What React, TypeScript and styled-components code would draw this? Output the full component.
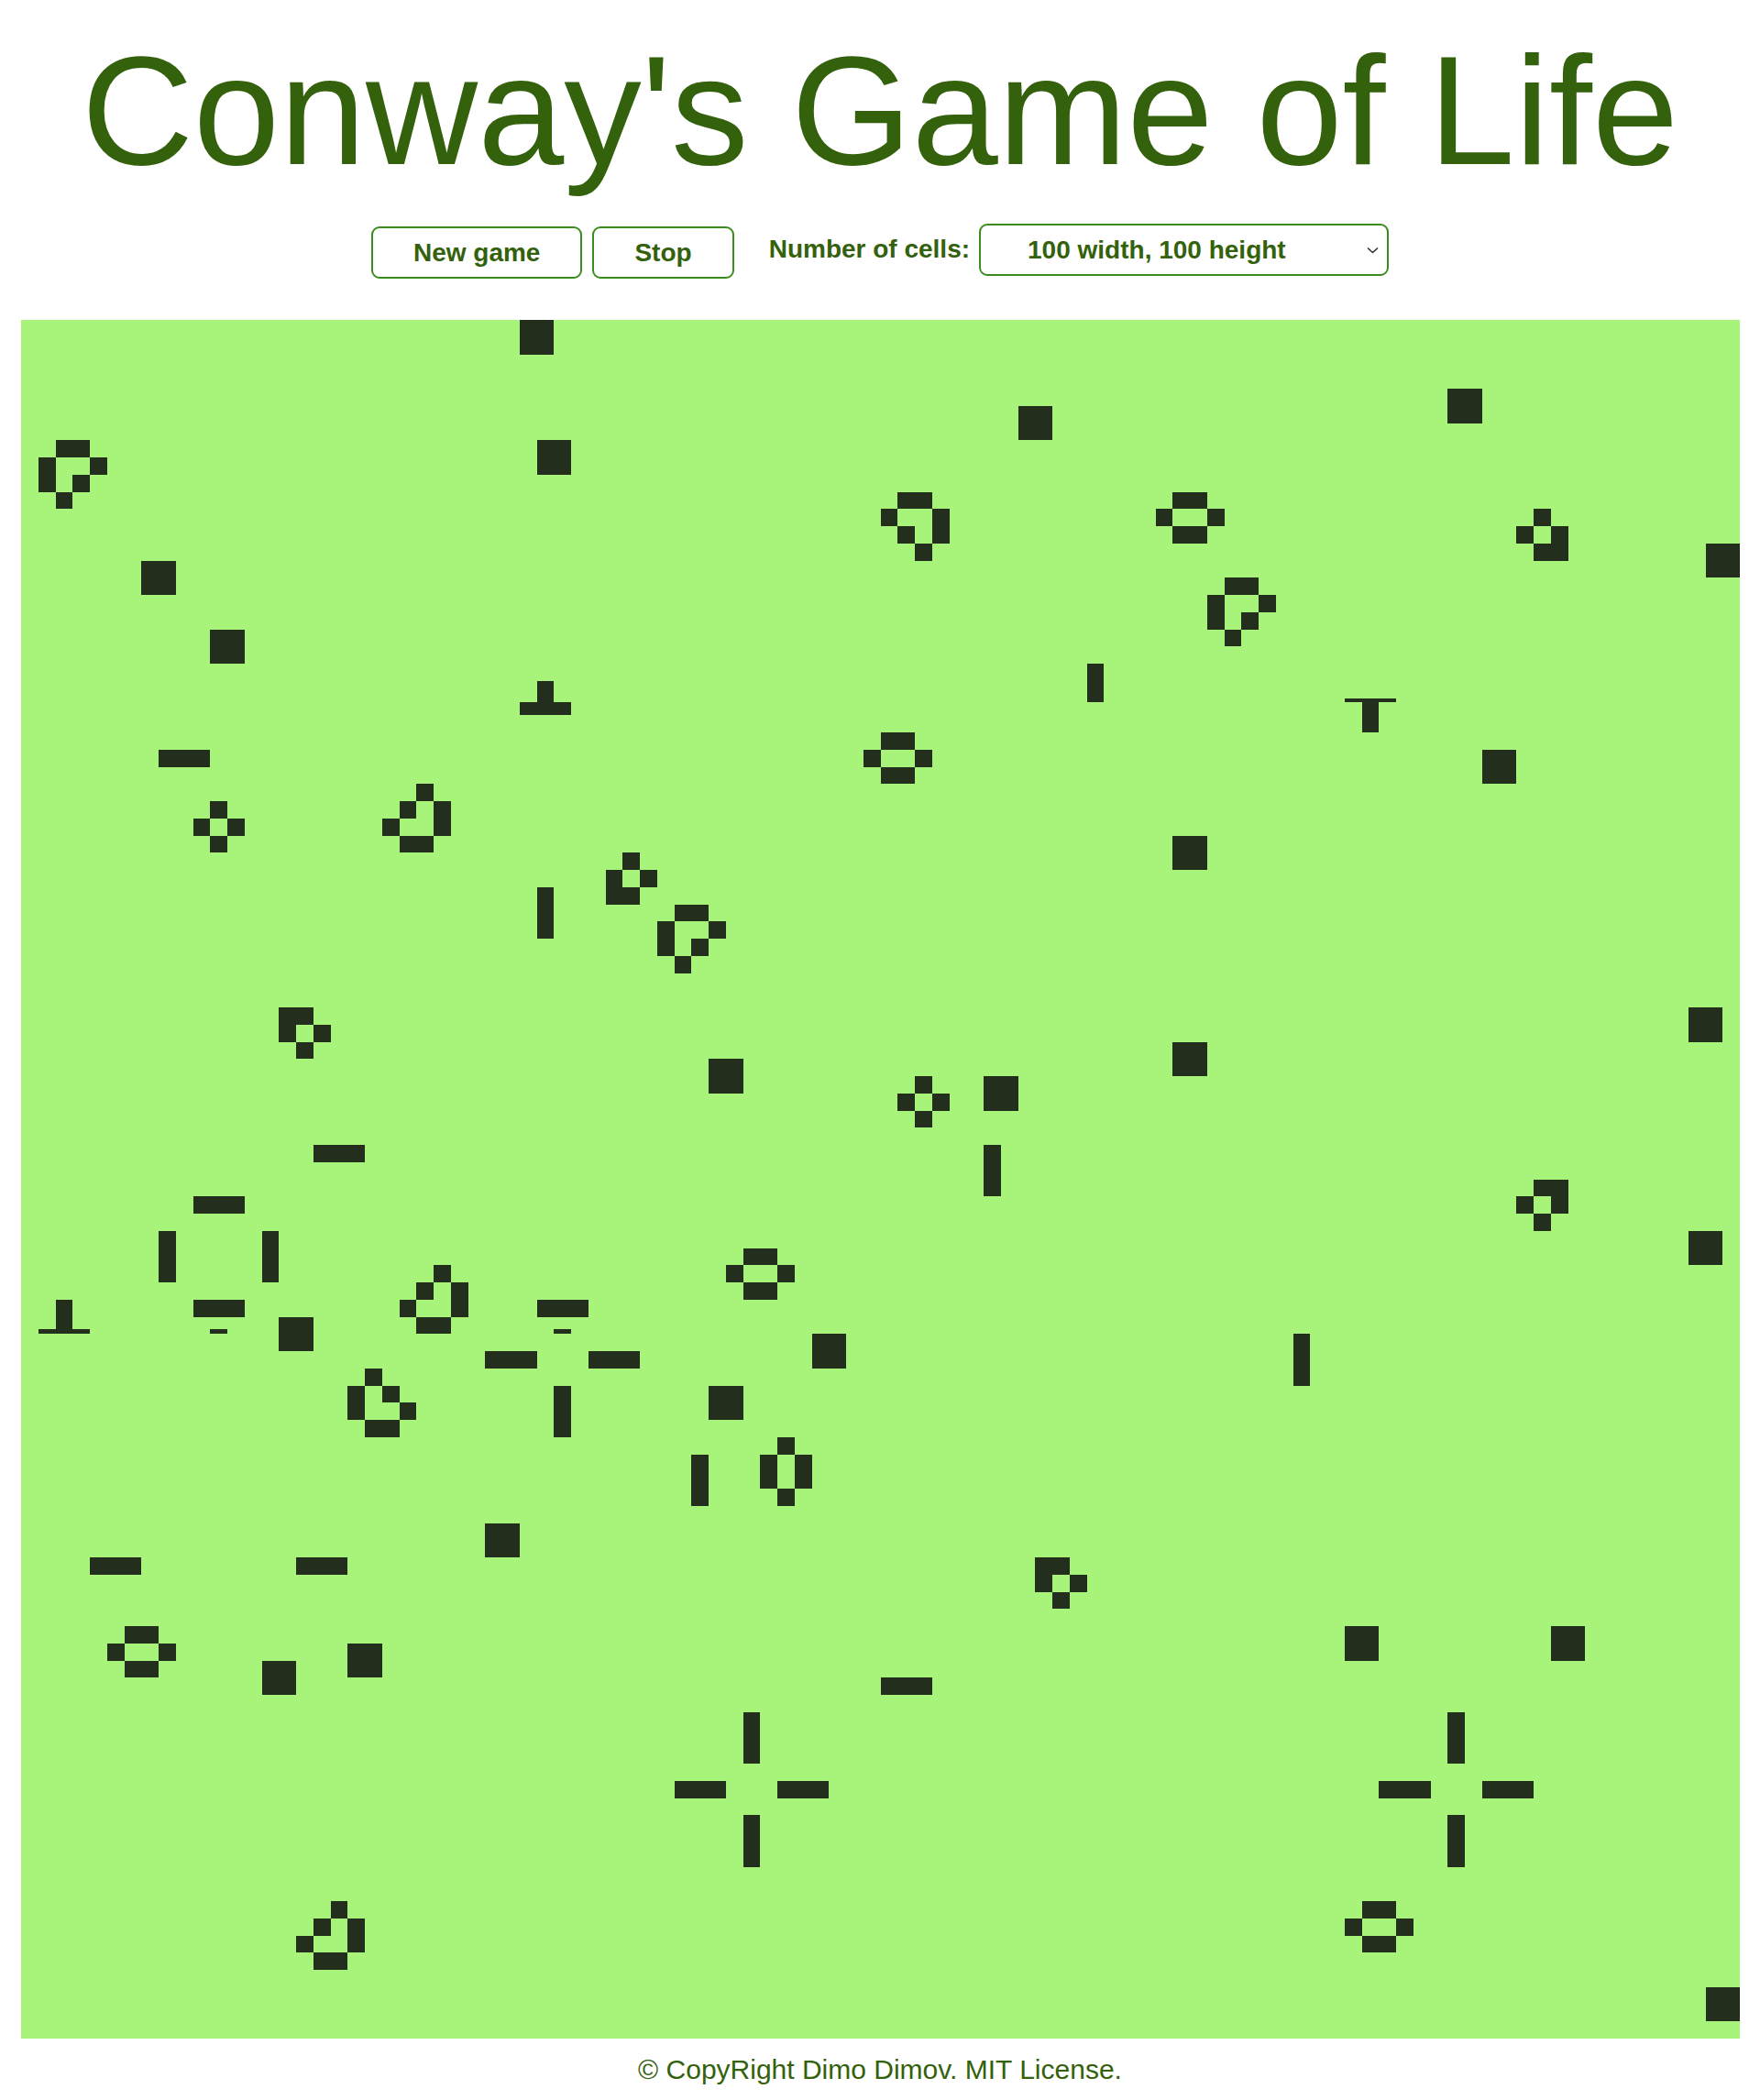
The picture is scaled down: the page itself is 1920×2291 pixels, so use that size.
import React from "react";
import styled, { createGlobalStyle } from "styled-components";

const GREEN_TEXT = "#33610c";
const GREEN_BORDER = "#3b8c1f";
const LIVE = "#232f1c";
const DEAD = "#a8f47a";

const GlobalStyle = createGlobalStyle`
  html, body {
    margin: 0;
    padding: 0;
    background: #ffffff;
  }
  body {
    font-family: "Liberation Sans", Arial, sans-serif;
  }
`;

const Page = styled.div`
  display: flex;
  flex-direction: column;
  align-items: center;
`;

const Title = styled.h1`
  margin: 24px 0 0;
  font-size: 169px;
  line-height: 194px;
  font-weight: 400;
  color: ${GREEN_TEXT};
  white-space: nowrap;
`;

const Controls = styled.div`
  display: flex;
  align-items: flex-start;
  margin-top: 26px;
  height: 60px;
`;

const Button = styled.button<{ $gapRight: number }>`
  margin-top: 3px;
  margin-right: ${(p) => p.$gapRight}px;
  height: 57px;
  padding: 0 44px;
  border: 2px solid ${GREEN_BORDER};
  border-radius: 9px;
  background: #ffffff;
  color: ${GREEN_TEXT};
  font-family: "Liberation Sans", Arial, sans-serif;
  font-size: 28px;
  font-weight: 700;
  cursor: pointer;
`;

const Label = styled.label`
  margin-top: 12px;
  margin-right: 10px;
  font-size: 28px;
  line-height: 32px;
  font-weight: 700;
  color: ${GREEN_TEXT};
`;

const SelectWrap = styled.div`
  position: relative;
  width: 447px;
  height: 57px;
`;

const Select = styled.select`
  appearance: none;
  -webkit-appearance: none;
  width: 447px;
  height: 57px;
  padding: 0 30px 0 51px;
  border: 2px solid ${GREEN_BORDER};
  border-radius: 9px;
  background: #ffffff;
  color: ${GREEN_TEXT};
  font-family: "Liberation Sans", Arial, sans-serif;
  font-size: 28px;
  font-weight: 700;
  outline: none;
`;

const Chevron = styled.svg`
  position: absolute;
  right: 11px;
  top: 25px;
  width: 13px;
  height: 8px;
  pointer-events: none;
`;

const BoardFrame = styled.div`
  margin-top: 45px;
  width: 1875px;
  height: 1875px;
  background: ${DEAD};
`;

const BoardSvg = styled.svg`
  display: block;
  width: 1875px;
  height: 1875px;
`;

const Cell = styled.rect`
  fill: ${LIVE};
`;

const Footer = styled.footer`
  margin-top: 17px;
  font-size: 30px;
  line-height: 34.5px;
  color: ${GREEN_TEXT};
`;

type P = [number, number];
const block = (r: number, c: number): P[] => [
  [r, c],
  [r, c + 1],
  [r + 1, c],
  [r + 1, c + 1],
];
const hline = (r: number, c: number): P[] => [
  [r, c],
  [r, c + 1],
  [r, c + 2],
];
const vline = (r: number, c: number): P[] => [
  [r, c],
  [r + 1, c],
  [r + 2, c],
];

const FULL: P[] = [
  ...block(0, 29),
  [7, 2], [7, 3], [8, 1], [8, 4], [9, 1], [9, 3], [10, 2],
  ...block(7, 30),
  ...block(14, 7),
  ...block(18, 11),
  [21, 30], [22, 30],
  ...hline(25, 8),
  [28, 11], [29, 10], [29, 12], [30, 11],
  [27, 23], [28, 22], [28, 24], [29, 21], [29, 24], [30, 22], [30, 23],
  ...vline(33, 30),
  ...block(5, 58),
  [10, 51], [10, 52], [11, 50], [11, 53], [12, 51], [12, 53], [13, 52],
  [10, 67], [10, 68], [11, 66], [11, 69], [12, 67], [12, 68],
  [24, 50], [24, 51], [25, 49], [25, 52], [26, 50], [26, 51],
  ...block(30, 67),
  [31, 35], [32, 34], [32, 36], [33, 34], [33, 35],
  ...block(4, 83),
  [11, 88], [12, 87], [12, 89], [13, 88], [13, 89],
  ...block(13, 98),
  [15, 70], [15, 71], [16, 69], [16, 72], [17, 69], [17, 71], [18, 70],
  ...block(25, 85),
  [40, 15], [40, 16], [41, 15], [41, 17], [42, 16],
  ...hline(48, 17),
  ...hline(51, 10),
  ...vline(53, 8),
  ...vline(53, 14),
  ...hline(57, 10),
  ...block(58, 15),
  [55, 24], [56, 23], [56, 25], [57, 22], [57, 25], [58, 23], [58, 24],
  ...hline(57, 30),
  ...hline(60, 27),
  ...hline(60, 33),
  ...vline(62, 31),
  [61, 20], [62, 19], [62, 21], [63, 19], [63, 22], [64, 20], [64, 21],
  [34, 38], [34, 39], [35, 37], [35, 40], [36, 37], [36, 39], [37, 38],
  ...block(42, 67),
  ...block(43, 40),
  [44, 52], [45, 51], [45, 53], [46, 52],
  ...block(44, 56),
  ...vline(48, 56),
  [54, 42], [54, 43], [55, 41], [55, 44], [56, 42], [56, 43],
  ...block(59, 46),
  ...block(62, 40),
  ...vline(66, 39),
  [65, 44], [66, 43], [66, 45], [67, 43], [67, 45], [68, 44],
  ...block(40, 97),
  [50, 88], [50, 89], [51, 87], [51, 89], [52, 88],
  ...block(53, 97),
  ...vline(59, 74),
  ...block(70, 27),
  ...hline(72, 4),
  ...hline(72, 16),
  [76, 6], [76, 7], [77, 5], [77, 8], [78, 6], [78, 7],
  ...block(78, 14),
  ...block(77, 19),
  [92, 18], [93, 17], [93, 19], [94, 16], [94, 19], [95, 17], [95, 18],
  [72, 59], [72, 60], [73, 59], [73, 61], [74, 60],
  ...hline(79, 50),
  ...vline(81, 42),
  ...vline(87, 42),
  ...hline(85, 38),
  ...hline(85, 44),
  ...block(76, 77),
  ...block(76, 89),
  ...vline(81, 83),
  ...vline(87, 83),
  ...hline(85, 79),
  ...hline(85, 85),
  [92, 78], [92, 79], [93, 77], [93, 80], [94, 78], [94, 79],
  ...block(97, 98),
];

type R = { x: number; y: number; w: number; h: number };
const PARTIAL: R[] = [
  { x: 29, y: 22.25, w: 1, h: 0.75 },
  { x: 31, y: 22.25, w: 1, h: 0.75 },
  { x: 62, y: 20, w: 1, h: 2.25 },
  { x: 77, y: 22, w: 3, h: 0.25 },
  { x: 78, y: 22.25, w: 1, h: 1.75 },
  { x: 11, y: 58.72, w: 1, h: 0.28 },
  { x: 2, y: 57, w: 1, h: 1.72 },
  { x: 1, y: 58.72, w: 3, h: 0.28 },
  { x: 31, y: 58.72, w: 1, h: 0.28 },
];

export default function App() {
  return (
    <>
      <GlobalStyle />
      <Page>
        <Title>Conway's Game of Life</Title>
        <Controls>
          <Button $gapRight={11}>New game</Button>
          <Button $gapRight={38}>Stop</Button>
          <Label htmlFor="cells">Number of cells:</Label>
          <SelectWrap>
            <Select id="cells" defaultValue="100">
              <option value="100">100 width, 100 height</option>
              <option value="50">50 width, 50 height</option>
              <option value="30">30 width, 30 height</option>
            </Select>
            <Chevron viewBox="0 0 13 8" aria-hidden="true">
              <path d="M1 1.5 L6.5 6.5 L12 1.5" fill="none" stroke="#2b2b2b" strokeWidth="1.5" />
            </Chevron>
          </SelectWrap>
        </Controls>
        <BoardFrame>
          <BoardSvg viewBox="0 0 100 100" preserveAspectRatio="none" shapeRendering="crispEdges">
            {FULL.map(([r, c], i) => (
              <Cell key={`f${i}`} x={c} y={r} width={1} height={1} />
            ))}
            {PARTIAL.map((p, i) => (
              <Cell key={`p${i}`} x={p.x} y={p.y} width={p.w} height={p.h} />
            ))}
          </BoardSvg>
        </BoardFrame>
        <Footer>© CopyRight Dimo Dimov. MIT License.</Footer>
      </Page>
    </>
  );
}
